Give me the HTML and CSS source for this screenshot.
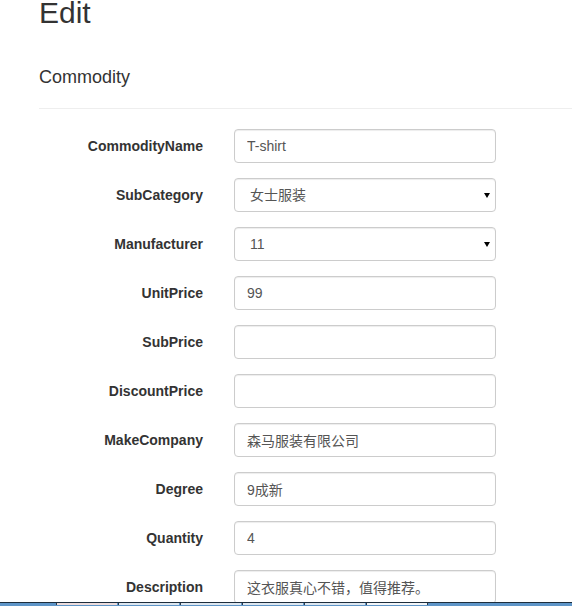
FILE: index.html
```html
<!DOCTYPE html>
<html lang="zh">
<head>
<meta charset="utf-8">
<title>Edit</title>
<link rel="stylesheet" href="styles.css">
</head>
<body>
<div class="container">
  <h2 class="title">Edit</h2>
  <h4 class="subtitle">Commodity</h4>
  <hr class="rule">
  <form class="form">
    <div class="form-group">
      <label class="control-label">CommodityName</label>
      <input class="form-control" type="text" value="T-shirt">
    </div>
    <div class="form-group">
      <label class="control-label">SubCategory</label>
      <div class="select-wrap">
        <select class="form-control select"><option>女士服装</option></select>
        <span class="caret"></span>
      </div>
    </div>
    <div class="form-group">
      <label class="control-label">Manufacturer</label>
      <div class="select-wrap">
        <select class="form-control select"><option>11</option></select>
        <span class="caret"></span>
      </div>
    </div>
    <div class="form-group">
      <label class="control-label">UnitPrice</label>
      <input class="form-control" type="text" value="99">
    </div>
    <div class="form-group">
      <label class="control-label">SubPrice</label>
      <input class="form-control" type="text" value="">
    </div>
    <div class="form-group">
      <label class="control-label">DiscountPrice</label>
      <input class="form-control" type="text" value="">
    </div>
    <div class="form-group">
      <label class="control-label">MakeCompany</label>
      <input class="form-control" type="text" value="森马服装有限公司">
    </div>
    <div class="form-group">
      <label class="control-label">Degree</label>
      <input class="form-control" type="text" value="9成新">
    </div>
    <div class="form-group">
      <label class="control-label">Quantity</label>
      <input class="form-control" type="text" value="4">
    </div>
    <div class="form-group">
      <label class="control-label">Description</label>
      <input class="form-control" type="text" value="这衣服真心不错，值得推荐。">
    </div>
  </form>
</div>
<div class="taskbar">
  <span class="seg seg-blue seg-start"></span>
  <span class="seg seg-light seg-pink"></span>
  <span class="seg seg-light"></span>
  <span class="seg seg-light"></span>
  <span class="seg seg-light"></span>
  <span class="seg seg-light"></span>
  <span class="seg seg-light seg-white"></span>
  <span class="seg seg-blue seg-end"></span>
</div>
</body>
</html>
```

FILE: styles.css
```css
html, body {
  margin: 0;
  padding: 0;
  background: #fff;
}
body {
  font-family: "Liberation Sans", Arial, "Noto Sans CJK SC", sans-serif;
  font-size: 14px;
  line-height: 20px;
  color: #333;
  overflow: hidden;
}
.container {
  padding-left: 39px;
}
.title {
  margin: 0;
  font-size: 30px;
  line-height: 26px;
  font-weight: 500;
  color: #333;
}
.subtitle {
  margin: 42px 0 0;
  font-size: 18px;
  line-height: 19.8px;
  font-weight: 500;
  color: #333;
}
.rule {
  margin: 20px 0 20px;
  border: 0;
  border-top: 1px solid #eee;
  height: 0;
}
.form {
  display: flex;
  flex-direction: column;
  gap: 15px;
}
.form-group {
  display: grid;
  grid-template-columns: 164px 262px;
  column-gap: 31px;
  align-items: start;
}
.control-label {
  text-align: right;
  font-weight: bold;
  padding-top: 7px;
  line-height: 20px;
}
.form-control {
  box-sizing: border-box;
  display: block;
  width: 262px;
  height: 34px;
  margin: 0;
  padding: 6px 12px;
  font-family: "Liberation Sans", Arial, "Noto Sans CJK SC", sans-serif;
  font-size: 14px;
  line-height: 20px;
  color: #555;
  background: #fff;
  border: 1px solid #ccc;
  border-radius: 4px;
  box-shadow: inset 0 1px 1px rgba(0,0,0,0.075);
  outline: none;
}
.select-wrap {
  position: relative;
  width: 262px;
}
.select {
  appearance: none;
  -webkit-appearance: none;
  padding-left: 15px;
  padding-top: 6px;
  padding-bottom: 6px;
}
.caret {
  position: absolute;
  right: 6px;
  top: 15px;
  width: 0;
  height: 0;
  border-left: 3px solid transparent;
  border-right: 3px solid transparent;
  border-top: 5px solid #000;
  pointer-events: none;
}
.taskbar {
  position: fixed;
  left: 0;
  right: 0;
  bottom: 0;
  height: 3px;
  display: flex;
  border-top: 1px solid #1d2d3c;
  background: #5e95c8;
}
.seg {
  display: block;
  height: 2px;
}
.seg-start { width: 55px; }
.seg-end { flex: 1; }
.seg-blue { background: #5e95c8; }
.seg-light {
  width: 60px;
  margin-left: 1px;
  background: #dce6ef;
  border-left: 1px solid #2c3a48;
}
.seg-pink { background: #ecdcdc; }
.seg-white { background: #f2f5f8; border-right: 1px solid #2c3a48; }
```
